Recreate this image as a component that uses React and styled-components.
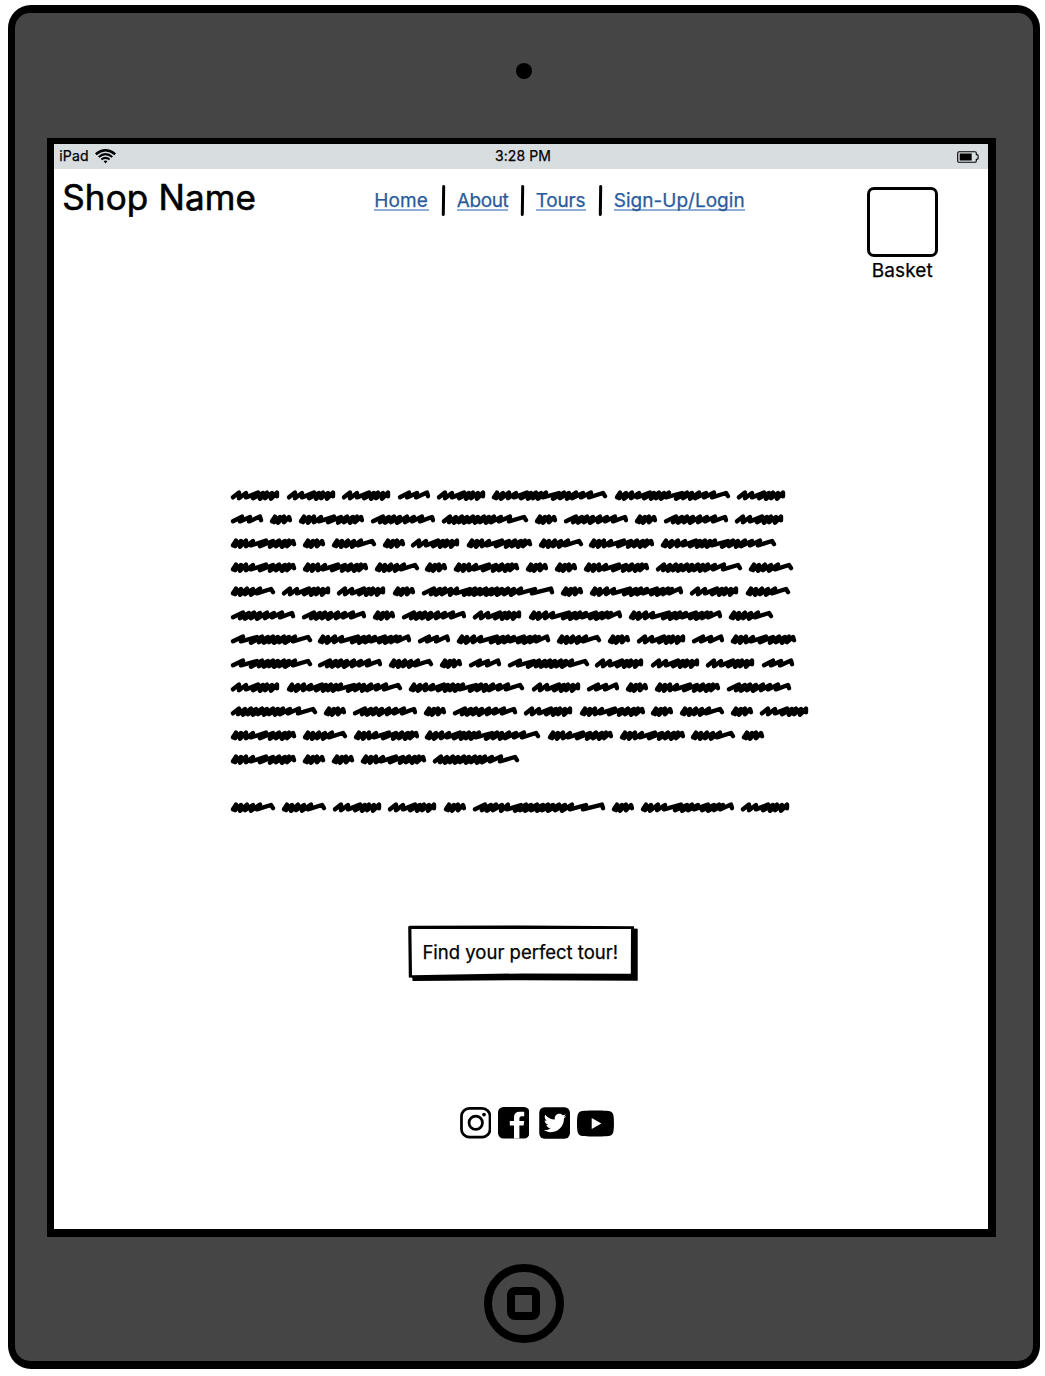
import React from "react";
import styled, { createGlobalStyle } from "styled-components";
import { FaTwitterSquare, FaYoutube } from "react-icons/fa";

const GlobalStyle = createGlobalStyle`
  *, *::before, *::after { box-sizing: border-box; }
  body {
    margin: 0;
    background: #fff;
    color: #000;
    font-family: Inter, Lato, "Liberation Sans", sans-serif;
    -webkit-text-stroke: 0.25px currentColor;
  }
`;

const Page = styled.div`
  width: 1045px;
  height: 1376px;
  padding: 5px 5px 7px 7.5px;
  overflow: hidden;
`;

const Device = styled.div`
  width: 1032.8px;
  height: 1364px;
  padding: 8px 7.8px 8px 7.5px;
  border-radius: 23px;
  background: #000;
`;

const Bezel = styled.div`
  display: flex;
  flex-direction: column;
  align-items: center;
  height: 100%;
  border-radius: 15px;
  background: #454545;
`;

const CameraArea = styled.div`
  display: flex;
  justify-content: center;
  height: 124.5px;
  padding-top: 49.5px;
`;

const Camera = styled.div`
  width: 16.5px;
  height: 16.5px;
  border-radius: 50%;
  background: #000;
`;

const ScreenFrame = styled.div`
  width: 949px;
  height: 1099.5px;
  margin-right: 5px;
  padding: 6.5px 8px 8px 7.5px;
  background: #000;
`;

const Screen = styled.main`
  display: flex;
  flex-direction: column;
  height: 100%;
  background: #fff;
`;

const HomeArea = styled.div`
  flex: 1;
  padding-top: 26.5px;
`;

const HomeButton = styled.div`
  display: grid;
  place-items: center;
  width: 79.5px;
  height: 79.5px;
  border: 8px solid #000;
  border-radius: 50%;
`;

const HomeGlyph = styled.div`
  width: 33px;
  height: 33px;
  border: 8px solid #000;
  border-radius: 8px;
`;

const StatusBar = styled.div`
  display: grid;
  grid-template-columns: 1fr auto 1fr;
  align-items: center;
  height: 24.5px;
  padding: 0 9px 0 5px;
  background: #d8dde0;
  font-size: 14px;
  line-height: 24px;
`;

const Carrier = styled.div`
  display: flex;
  align-items: center;
  gap: 6.5px;
  letter-spacing: 0.2px;
`;

const Clock = styled.div`
  letter-spacing: 0.1px;
  padding-left: 8px;
`;

const BatterySlot = styled.div`
  display: flex;
  justify-content: flex-end;
  padding-top: 1px;
`;

const Header = styled.header`
  display: flex;
  align-items: flex-start;
  height: 315px;
  padding-left: 8px;
`;

const ShopName = styled.h1`
  width: 312px;
  margin: 7px 0 0;
  font-size: 35px;
  font-weight: 400;
  line-height: 42px;
  letter-spacing: 0.15px;
  white-space: nowrap;
  -webkit-text-stroke-width: 0.6px;
`;

const Nav = styled.nav`
  display: flex;
  align-items: center;
  width: 492.5px;
  height: 33px;
  margin-top: 15px;
`;

const NavLink = styled.a`
  width: ${(p) => p.$width}px;
  height: 21px;
  border-bottom: 2px solid #8fafd5;
  color: #2a5b9d;
  font-size: 19px;
  line-height: 22px;
  letter-spacing: ${(p) => p.$spacing}px;
  text-decoration: none;
  white-space: nowrap;
`;

const Divider = styled.span`
  width: 3px;
  height: 31px;
  margin: 0 12px 0 13px;
  border-radius: 2px;
  background: #000;
  transform: rotate(0.8deg);
`;

const Basket = styled.div`
  display: flex;
  flex-direction: column;
  align-items: center;
  width: 71px;
  margin-top: 18.5px;
`;

const BasketBox = styled.div`
  width: 71px;
  height: 70px;
  border: 3px solid #000;
  border-radius: 7px;
`;

const BasketLabel = styled.span`
  margin-top: 3px;
  font-size: 19px;
  line-height: 22px;
  letter-spacing: 0.1px;
`;

const Copy = styled.section`
  display: flex;
  flex-direction: column;
  height: 441px;
  padding-left: 177px;
`;

const Line = styled.div`
  display: flex;
  flex: none;
  height: 24.05px;
`;

const ScribbleSvg = styled.svg`
  display: block;
  flex: none;
  overflow: visible;
`;

const Action = styled.button`
  position: relative;
  align-self: flex-start;
  width: 230px;
  height: 56px;
  margin: 0 0 0 353.5px;
  padding: 0 5px 2px 0;
  border: 0;
  background: none;
  color: #000;
  font: inherit;
  font-size: 18.5px;
  letter-spacing: 0;
  white-space: nowrap;
`;

const ActionFrame = styled.svg`
  position: absolute;
  inset: 0;
`;

const ActionLabel = styled.span`
  position: relative;
`;

const Socials = styled.footer`
  display: flex;
  align-items: center;
  height: 36px;
  margin: 124.5px 0 0 405.5px;
`;

const SocialIcon = styled.span`
  display: flex;
  align-items: center;
  justify-content: center;
  width: ${(p) => p.$width}px;
  height: 32px;
  margin-right: ${(p) => p.$gap || 0}px;
  border-radius: ${(p) => p.$radius || 0}px;
  overflow: hidden;
  font-size: ${(p) => p.$size || 36}px;
  svg { flex: none; }
`;

/* Each word is a zigzag: x of a trough, x of the next peak, and so on. */
const WORDS = {
  A: { advance: 55.5, pts: [2, 8, 8, 15, 15, 27, 22, 32, 29, 36, 34, 41, 40, 46, 46] },
  B: { advance: 39, pts: [2, 11, 9, 19, 18, 29, 30] },
  C: { advance: 28.9, pts: [2, 5, 4, 10, 8, 14, 14, 19, 20] },
  D: { advance: 71.75, pts: [2, 5, 4, 10, 9, 15, 15, 22, 20, 35, 29, 42, 39, 48, 45, 54, 51, 58, 56, 62, 63] },
  E: { advance: 71, pts: [2, 12, 9, 18, 14, 23, 20, 29, 26, 36, 34, 43, 41, 51, 49, 61, 62] },
  F: { advance: 50.7, pts: [2, 5, 4, 10, 9, 16, 14, 22, 20, 29, 26, 40, 42] },
  G: { advance: 93.1, pts: [2, 8, 7, 14, 12, 20, 17, 25, 22, 31, 27, 36, 33, 42, 38, 47, 44, 52, 49, 59, 57, 68, 67, 82, 84] },
  H: { advance: 122.4, pts: [2, 5, 4, 11, 9, 17, 16, 24, 22, 35, 29, 39, 36, 44, 41, 49, 46, 54, 51, 67, 61, 72, 68, 77, 75, 84, 80, 91, 89, 99, 97, 111, 113] },
  I: { advance: 100, pts: [2, 5, 4, 10, 9, 17, 16, 24, 23, 40, 34, 46, 41, 51, 47, 57, 53, 67, 61, 73, 67, 78, 73, 82, 79, 90, 91] },
  J: { advance: 139.3, pts: [2, 12, 9, 18, 14, 23, 20, 29, 28, 35, 34, 48, 42, 53, 47, 58, 52, 64, 58, 70, 64, 75, 69, 80, 75, 86, 82, 92, 89, 99, 97, 113, 110, 129, 130] },
  K: { advance: 87.1, pts: [2, 12, 10, 26, 20, 31, 28, 37, 33, 42, 38, 47, 43, 53, 48, 58, 54, 64, 62, 77, 79] },
};

const LINES = [
  "AAABAHHA",
  "BCDEGCECEA",
  "DCFCADFDH",
  "DDFCDCCDGF",
  "FAACJCIAF",
  "EECEAIIF",
  "KIBIFCABD",
  "KEFCBKAAAB",
  "AHHABCDE",
  "GCECEADCFCA",
  "DFDHDDFC",
  "DCCDG",
  "",
  "FFAACJCIA",
];

function scribblePath(pts) {
  return pts
    .map((x, i) => {
      if (i === 0) return `M${x} 13.3`;
      if (i % 2) return `L${x} ${i % 4 === 1 ? 8.6 : 9}`;
      const last = i === pts.length - 1;
      const dense = !last && pts[i + 1] - pts[i - 1] < 8;
      const y = last ? 12.2 : dense ? 14.8 - (i % 4) * 0.3 : 13.4;
      return `L${x} ${y}`;
    })
    .join("");
}

function Scribble({ kind }) {
  const { advance, pts } = WORDS[kind];
  return (
    <ScribbleSvg width={advance} height="24" viewBox={`0 0 ${advance} 24`} aria-hidden="true">
      <path d={scribblePath(pts)} fill="none" stroke="#000" strokeWidth="4.4" strokeLinecap="round" strokeLinejoin="round" />
    </ScribbleSvg>
  );
}

function Wifi() {
  return (
    <svg width="21" height="15" viewBox="0 0 21 15" fill="none" stroke="#000" strokeWidth="2">
      <path d="M.8 5.2Q10.5-2.6 20.2 5.2" strokeWidth="2.4" />
      <path d="M3.7 8Q10.5 2.4 17.3 8" strokeWidth="2.2" />
      <path d="M6.4 10.6Q10.5 7.2 14.6 10.6" />
      <path d="M8.6 12.2Q10.5 10.9 12.4 12.2L10.5 14.4Z" fill="#000" stroke="none" />
    </svg>
  );
}

function Battery() {
  return (
    <svg width="22" height="12" viewBox="0 0 22 12">
      <path d="M2 .7H18Q19.3.7 19.3 2V3.6L21.1 4.2V7.8L19.3 8.4V10Q19.3 11.3 18 11.3H2Q.7 11.3.7 10V2Q.7.7 2 .7Z" fill="none" stroke="#000" strokeWidth="1.1" />
      <path d="M2.7 2.5H14.7V9.5H2.7Z" />
    </svg>
  );
}

function Instagram() {
  return (
    <svg width="31.5" height="31.5" viewBox="0 0 32 32" fill="none" stroke="#000">
      <rect x="1.5" y="1.5" width="29" height="29" rx="8" strokeWidth="2.8" />
      <circle cx="16" cy="16" r="6.8" strokeWidth="2.8" />
      <circle cx="24.4" cy="7.7" r="1.9" fill="#000" stroke="none" />
    </svg>
  );
}

function Facebook() {
  return (
    <svg width="31.5" height="31.5" viewBox="0 0 31.5 31.5">
      <rect width="31.5" height="31.5" rx="5.5" />
      <path
        d="M16 31.5V18.4H11.8V13.9H16V10.3Q16 4.8 21.7 4.8H26.2V9.3H23.6Q21.4 9.3 21.4 11.3V13.9H26.2L25.6 18.4H21.4V31.5Z"
        fill="#fff"
      />
    </svg>
  );
}

export default function App() {
  return (
    <Page>
      <GlobalStyle />
      <Device>
        <Bezel>
          <CameraArea><Camera /></CameraArea>
          <ScreenFrame>
            <Screen>
              <StatusBar>
                <Carrier>iPad <Wifi /></Carrier>
                <Clock>3:28 PM</Clock>
                <BatterySlot><Battery /></BatterySlot>
              </StatusBar>
              <Header>
                <ShopName>Shop Name</ShopName>
                <Nav>
                  <NavLink $width={54.5} $spacing={0.1}>Home</NavLink>
                  <Divider />
                  <NavLink $width={51} $spacing={-0.4}>About</NavLink>
                  <Divider />
                  <NavLink $width={50} $spacing={-0.2}>Tours</NavLink>
                  <Divider />
                  <NavLink $width={131} $spacing={0.02}>Sign-Up/Login</NavLink>
                </Nav>
                <Basket>
                  <BasketBox />
                  <BasketLabel>Basket</BasketLabel>
                </Basket>
              </Header>
              <Copy>
                {LINES.map((line, i) => (
                  <Line key={i}>
                    {line.split("").map((kind, j) => <Scribble key={j} kind={kind} />)}
                  </Line>
                ))}
              </Copy>
              <Action>
                <ActionFrame width="230" height="56" viewBox="0 0 230 56">
                  <path d="M2 .8L114 .5 226 1.3V3.5L229.7 3.8V55.8L115 55.2 4.5 56 4.3 52.8.8 52.5.2 1.5Z" />
                  <path d="M3.4 4L223 4 222.8 48.8 115 48.4 4 50.2Z" fill="#fff" />
                </ActionFrame>
                <ActionLabel>Find your perfect tour!</ActionLabel>
              </Action>
              <Socials>
                <SocialIcon $width={31.5} $gap={6.5}><Instagram /></SocialIcon>
                <SocialIcon $width={31.5} $gap={9.5}><Facebook /></SocialIcon>
                <SocialIcon $width={31.5} $gap={5.5} $radius={6}><FaTwitterSquare /></SocialIcon>
                <SocialIcon $width={39} $size={39}><FaYoutube /></SocialIcon>
              </Socials>
            </Screen>
          </ScreenFrame>
          <HomeArea>
            <HomeButton><HomeGlyph /></HomeButton>
          </HomeArea>
        </Bezel>
      </Device>
    </Page>
  );
}
